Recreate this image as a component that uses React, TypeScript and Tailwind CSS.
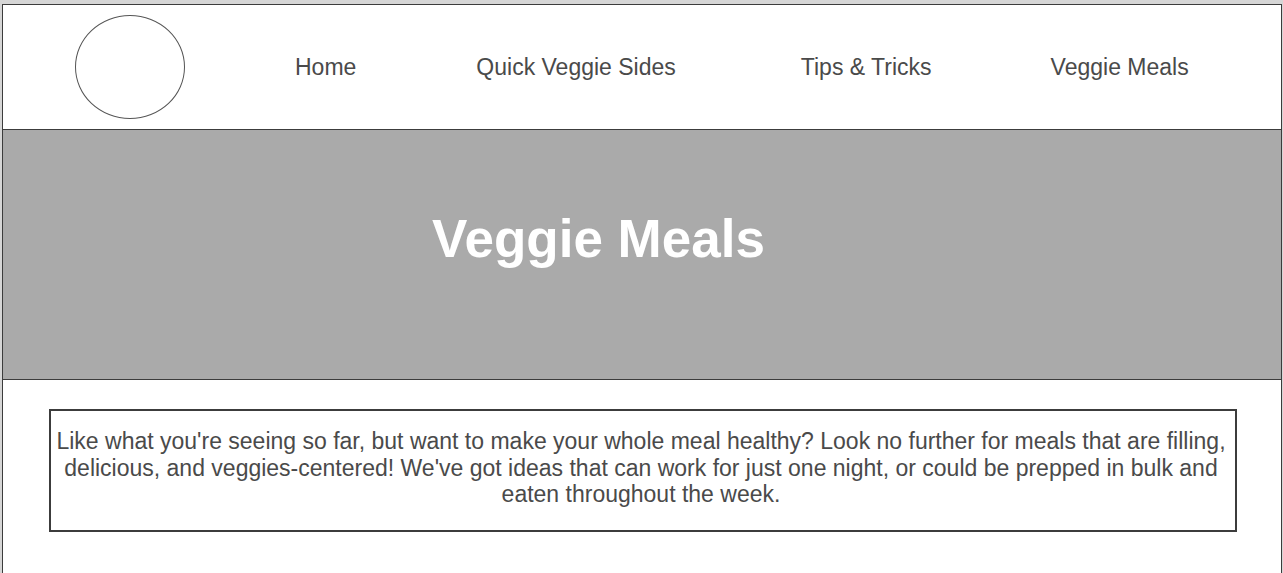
import React from 'react';

const navItems = [
  { label: 'Home', gap: 'ml-[110px]' },
  { label: 'Quick Veggie Sides', gap: 'ml-[120px]' },
  { label: 'Tips & Tricks', gap: 'ml-[125px]' },
  { label: 'Veggie Meals', gap: 'ml-[119px]' },
];

const App: React.FC = () => {
  return (
    <div className="min-h-[573px] bg-[#d6d6d6] pt-[4px] pl-[2px] pr-[1px] font-['Liberation_Sans',Arial,sans-serif]">
      <div className="min-h-[569px] bg-white border-l border-t border-r border-[#3c3c3c]">
        {/* header */}
        <header className="h-[125px] flex items-center border-b border-[#3c3c3c]">
          <div className="ml-[72px] w-[110px] h-[104px] rounded-[50%] border border-[#555] shrink-0" />
          <nav className="flex items-center text-[23px] text-[#4a4a4a]">
            {navItems.map((item) => (
              <a key={item.label} href="#" className={item.gap}>
                {item.label}
              </a>
            ))}
          </nav>
        </header>

        {/* hero */}
        <section className="h-[250px] bg-[#aaaaaa] border-b border-[#3c3c3c] pt-[78px] pr-[87px] text-center">
          <h1 className="text-[53px] leading-[62px] font-bold text-white">Veggie Meals</h1>
        </section>

        {/* intro */}
        <div className="pt-[29px] pl-[46px] pr-[44px]">
          <div className="h-[123px] border-2 border-[#3c3c3c] pt-[17px] pl-[2px] pr-[6px] text-center text-[23px] leading-[26.5px] text-[#4a4a4a]">
            Like what you're seeing so far, but want to make your whole meal healthy? Look no further for meals that are filling,
            delicious, and veggies-centered! We've got ideas that can work for just one night, or could be prepped in bulk and
            eaten throughout the week.
          </div>
        </div>
      </div>
    </div>
  );
};

export default App;
